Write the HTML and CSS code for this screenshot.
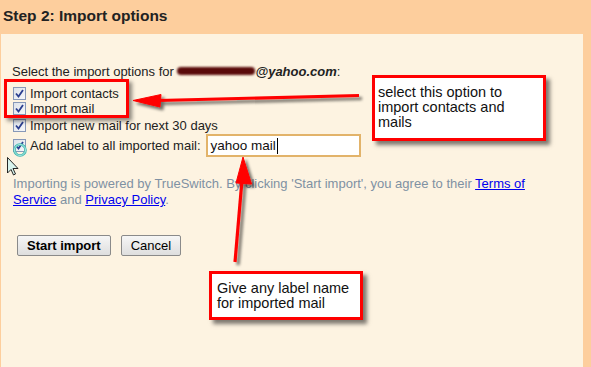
FILE: index.html
```html
<!DOCTYPE html>
<html>
<head>
<meta charset="utf-8">
<link rel="stylesheet" href="styles.css">
</head>
<body>
<div class="frame">
  <h1 class="title">Step 2: Import options</h1>
  <div class="panel">
    <p class="intro">Select the import options for <span class="redact"></span><b>@yahoo.com</b>:</p>
    <div class="options">
      <label class="row"><span class="cb"><svg viewBox="0 0 13 13" width="13" height="13"><path d="M3 6.5 L5.5 9.5 L10 3" fill="none" stroke="#2b3f8f" stroke-width="1.8"/></svg></span>Import contacts</label>
      <label class="row"><span class="cb"><svg viewBox="0 0 13 13" width="13" height="13"><path d="M3 6.5 L5.5 9.5 L10 3" fill="none" stroke="#2b3f8f" stroke-width="1.8"/></svg></span>Import mail</label>
      <label class="row row3"><span class="cb"><svg viewBox="0 0 13 13" width="13" height="13"><path d="M3 6.5 L5.5 9.5 L10 3" fill="none" stroke="#2b3f8f" stroke-width="1.8"/></svg></span>Import new mail for next 30 days</label>
      <div class="row row4"><span class="cb"><svg viewBox="0 0 13 13" width="13" height="13"><path d="M3 6.5 L5.5 9.5 L10 3" fill="none" stroke="#2b3f8f" stroke-width="1.8"/></svg></span>Add label to all imported mail:<span class="field">yahoo mail<span class="caret"></span></span></div>
    </div>
    <p class="powered">Importing is powered by TrueSwitch. By clicking 'Start import', you agree to their <a href="#">Terms of</a> <a href="#">Service</a> and <a href="#">Privacy Policy</a>.</p>
    <div class="actions">
      <button class="btn btn-primary">Start import</button>
      <button class="btn">Cancel</button>
    </div>
  </div>
</div>

<div class="hl-box"></div>
<div class="note note-top">select this option to<br>import contacts and<br>mails</div>
<div class="note note-bottom">Give any label name<br>for imported mail</div>

<svg class="overlay" width="591" height="367" viewBox="0 0 591 367">
  <defs>
    <filter id="sh" x="-20%" y="-20%" width="140%" height="140%">
      <feGaussianBlur in="SourceAlpha" stdDeviation="1.6"/>
      <feOffset dx="3" dy="3" result="b"/>
      <feComponentTransfer><feFuncA type="linear" slope="0.55"/></feComponentTransfer>
      <feMerge><feMergeNode/><feMergeNode in="SourceGraphic"/></feMerge>
    </filter>
  </defs>
  <g filter="url(#sh)" fill="#ff0000" stroke="#ff0000">
    <path d="M359 95.5 L158 100.5" stroke-width="3.2" fill="none"/>
    <path d="M133 100.5 L161 94.5 L160 107 Z" stroke-width="1"/>
    <path d="M235 262 L242 180" stroke-width="3.2" fill="none"/>
    <path d="M243 157 L251.5 184 L236 183 Z" stroke-width="1"/>
  </g>
  <g class="cursor">
    <circle cx="20" cy="150" r="5.5" fill="none" stroke="#3fb8b0" stroke-width="2.6"/>
    <circle cx="20" cy="150" r="5.5" fill="none" stroke="#c8f3ee" stroke-width="0.8"/>
    <path d="M7.5 157.5 L7.5 173 L11 169.5 L13.5 175 L15.5 174 L13 168.5 L18 168.5 Z" fill="#d8f4ee" stroke="#111" stroke-width="0.9"/>
  </g>
</svg>
</body>
</html>
```

FILE: styles.css
```css
html, body {
  margin: 0;
  padding: 0;
  width: 591px;
  height: 367px;
  overflow: hidden;
  font-family: "Liberation Sans", Arial, sans-serif;
  font-size: 13px;
  color: #222;
  position: relative;
}

.frame {
  background: #fdce9d;
  padding: 0 8px 0 1px;
  height: 367px;
  box-sizing: border-box;
  display: flex;
  flex-direction: column;
}

.title {
  margin: 0;
  height: 34px;
  box-sizing: border-box;
  padding: 6px 0 0 2px;
  font-size: 15.5px;
  line-height: 19px;
  font-weight: bold;
  color: #222;
}

.panel {
  flex: 1;
  background: #fdf3e1;
  padding: 30px 0 0 11px;
}

.intro {
  margin: 0;
  line-height: 16px;
}

.intro b {
  font-style: italic;
}

.redact {
  display: inline-block;
  width: 78px;
  height: 8px;
  vertical-align: 1px;
  background: #5a0a0a;
  border-radius: 4px;
  filter: blur(1.2px);
  margin-right: 0;
}

.options {
  margin-top: 6px;
  display: flex;
  flex-direction: column;
}

.row {
  display: flex;
  align-items: center;
  height: 15px;
  line-height: 15px;
}

.row3 {
  margin-top: 2px;
}

.row4 {
  height: 23px;
  margin-top: 1px;
}

.cb {
  width: 11px;
  height: 11px;
  border: 1px solid #8798b8;
  background: linear-gradient(135deg, #dde2ea, #f6f7f9);
  margin: 0 4px 0 1px;
  position: relative;
  flex: none;
}

.cb svg {
  position: absolute;
  left: -1px;
  top: -1px;
}

.field {
  margin-left: 5px;
  width: 148px;
  height: 19px;
  border: 2px solid #e2b36a;
  background: #fff;
  color: #111;
  font-size: 13.5px;
  line-height: 19px;
  padding-left: 3px;
  box-sizing: content-box;
  display: flex;
  align-items: center;
}

.caret {
  width: 1px;
  height: 16px;
  background: #000;
  margin-left: 1px;
}

.powered {
  margin: 19px 0 0 1px;
  width: 545px;
  line-height: 16px;
  color: #7f91a3;
}

.powered a {
  color: #0000ee;
}

.actions {
  margin-top: 27px;
  display: flex;
  gap: 10px;
  padding-left: 5px;
}

.btn {
  height: 21px;
  padding: 0 9px;
  white-space: nowrap;
  font-family: "Liberation Sans", Arial, sans-serif;
  font-size: 13px;
  color: #000;
  border: 1px solid #8a8a8a;
  border-radius: 2px;
  background: linear-gradient(#f6f6f6, #dedede);
}

.btn-primary {
  font-weight: bold;
}

.hl-box {
  position: absolute;
  left: 4px;
  top: 79px;
  width: 125px;
  height: 39px;
  box-sizing: border-box;
  border: 3px solid #ff0000;
  box-shadow: 3px 3px 4px rgba(0, 0, 0, 0.45);
}

.note {
  position: absolute;
  box-sizing: border-box;
  background: #fff;
  border: 3px solid #ff0000;
  box-shadow: 4px 4px 4px rgba(0, 0, 0, 0.5);
  color: #111;
  font-size: 14.5px;
  line-height: 15px;
  padding: 7px 3px 0 3px;
}

.note-top {
  left: 372px;
  top: 75px;
  width: 174px;
  height: 66px;
}

.note-bottom {
  left: 209px;
  top: 271px;
  width: 154px;
  height: 49px;
  padding-left: 5px;
}

.overlay {
  position: absolute;
  left: 0;
  top: 0;
  pointer-events: none;
}
```
